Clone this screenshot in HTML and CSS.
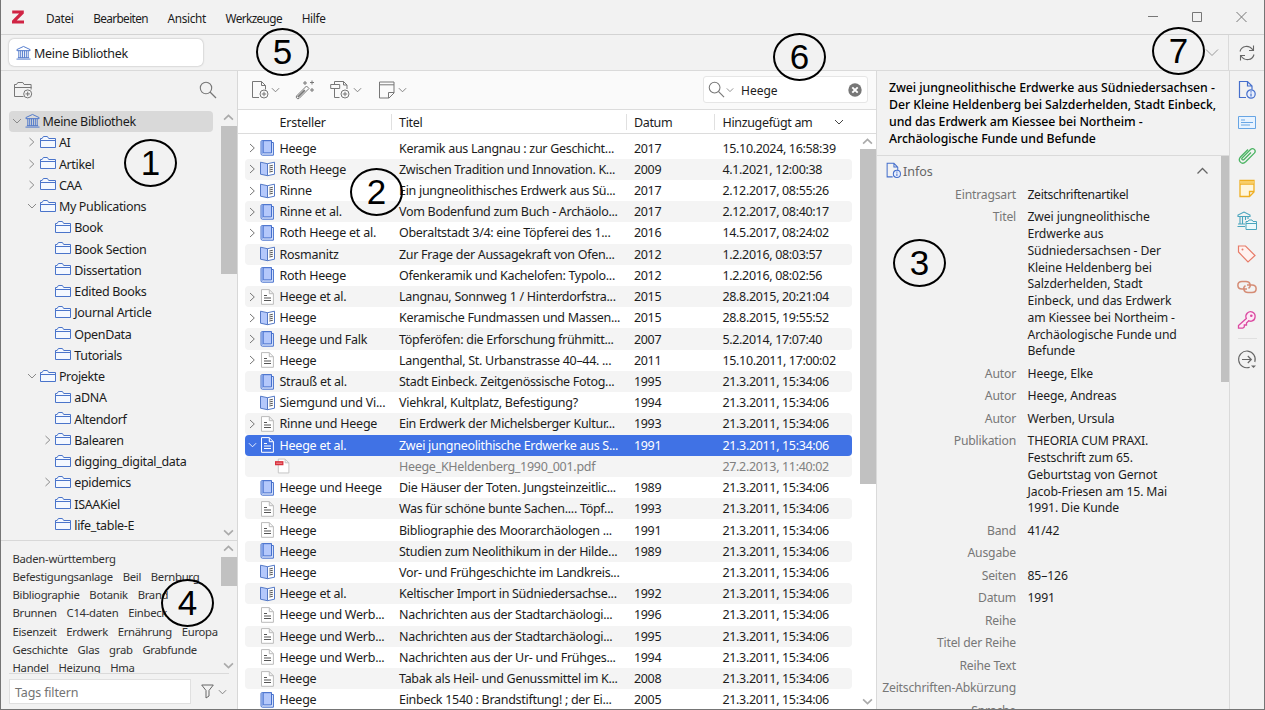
FILE: index.html
```html
<!DOCTYPE html>
<html lang="de">
<head>
<meta charset="utf-8">
<title>Zotero</title>
<link rel="stylesheet" href="styles.css">
</head>
<body>
<svg class="defs" width="0" height="0">
  <symbol id="library" viewBox="0 0 16 16"><path d="M1 5.5V4.3L8 1l7 3.3v1.2zM.5 14.5h15M2 13h12M3 5.5V13M5 5.5V13M7 5.5V13M9 5.5V13M11 5.5V13M13 5.5V13" fill="none" stroke="currentColor"/></symbol>
  <symbol id="folder" viewBox="0 0 16 14"><path d="M.5 12.5v-9h1.6l1.300-2h4l1.300 2h6.800v9zM.5 5.500h15" fill="#f4f8ff" stroke="currentColor"/></symbol>
  <symbol id="right" viewBox="0 0 8 10"><path d="M1.500 1l4.300 4-4.300 4" fill="none" stroke="currentColor"/></symbol>
  <symbol id="down" viewBox="0 0 10 8"><path d="M1 2l4 4 4-4" fill="none" stroke="currentColor"/></symbol>
  <symbol id="up" viewBox="0 0 10 8"><path d="M1 6l4-4 4 4" fill="none" stroke="currentColor"/></symbol>
  <symbol id="book" viewBox="0 0 15 16"><path d="M1 1.500v12.300c0 .9.500 1.400 1.400 1.400h11V2.500h-2V.7H2C1.300.7 1 1 1 1.500z" fill="#e4ecff" stroke="#456fcc"/><path d="M3.200.7h8.300v12.200H3.200z" fill="#b4c8fb" stroke="#456fcc"/><path d="M1.500 1.200h1.500v12.500H1.500z" fill="#7f9fe6"/></symbol>
  <symbol id="section" viewBox="0 0 15 16"><path d="M.5 1.200l7 1.500v12l-7-1.500z" fill="#b4c8fb" stroke="#5579c6"/><path d="M7.500 2.700l7-1.500v12l-7 1.500z" fill="#fff" stroke="#5579c6"/><path d="M9.300 5l3.500-.7M9.300 7l3.500-.7M9.300 9l3.500-.7M9.300 11l3.500-.7" stroke="#555"/></symbol>
  <symbol id="article" viewBox="0 0 15 16"><path d="M1.500.6h7.800l4.100 4.100v10.600H1.500zM9.300.6v4.100h4.100" fill="var(--paper,#fff)" stroke="var(--edge,#bbb)"/><path d="M4 6.500h3M4 9h7M4 11.500h7" stroke="var(--ink,#555)" stroke-width="1.100"/></symbol>
  <symbol id="pdf" viewBox="0 0 16 16"><path d="M3.500.6h7.300l4 4v10.800H3.500zM10.800.6v4h4" fill="#fff" stroke="#c3c3c3"/><path d="M0 2.800h9v4.400H0z" fill="#d8303c"/><path d="M1.300 5h6.400" stroke="#f0a0a6"/></symbol>
  <symbol id="search" viewBox="0 0 18 18"><circle cx="7" cy="7" r="5.700" fill="none" stroke="currentColor" stroke-width="1.100"/><path d="M11 11l6 6" stroke="currentColor" stroke-width="1.200"/></symbol>
</svg>

<div class="window">
  <header class="titlebar">
    <svg class="logo" viewBox="0 0 12 14"><path d="M.2.500h11.600v2.900L4.700 10.600h7.300v3H0v-2.900l7.100-7.200H.2z" fill="#d02444"/></svg>
    <nav class="menu"><span>Datei</span><span>Bearbeiten</span><span>Ansicht</span><span>Werkzeuge</span><span>Hilfe</span></nav>
    <svg class="winbtns" viewBox="0 0 104 14"><path d="M0 6.500h10M44.500 2.500h9v9h-9zM88.500 2l10 10M98.500 2l-10 10" fill="none" stroke="#777"/></svg>
  </header>
  <div class="tabbar">
    <div class="tab"><svg class="lib"><use href="#library"/></svg><span>Meine Bibliothek</span></div>
    <svg class="tabmenu" viewBox="0 0 14 10"><path d="M1 1.500l6 6 6-6" fill="none" stroke="#999"/></svg>
    <div class="sync"><svg viewBox="0 0 18 18"><path d="M2 7.500C3.500 1.500 11 .5 15 6M15.500 1.500V6.500H11M16 10.500C14.500 16.500 7 17.500 3 12M2.500 16.500V11.500H7" fill="none" stroke="#666" stroke-width="1.100"/></svg></div>
  </div>
  <main class="panes">
    <aside class="left">
      <div class="lefttools">
        <svg class="newcol" viewBox="0 0 20 18"><path d="M10.500 15.500H1.500v-12h2l1.300-2h5l1.300 2h7v5M1.500 6.500h17" fill="none" stroke="#777"/><circle cx="14.700" cy="12.900" r="4" fill="#f2f2f2" stroke="#777"/><path d="M12.500 12.900h4.400M14.700 10.700v4.400" stroke="#777"/></svg>
        <svg class="find"><use href="#search"/></svg>
      </div>
      <div class="treebox"><div class="tree" id="tree"></div>
        <div class="scroll treescroll"><svg><use href="#up"/></svg><i></i><b></b><svg><use href="#down"/></svg></div>
      </div>
      <div class="tagbox"><div class="tags" id="tags"></div>
        <div class="scroll tagscroll"><svg><use href="#up"/></svg><i></i><b></b><svg><use href="#down"/></svg></div>
      </div>
      <div class="tagfilter"><div class="field">Tags filtern</div>
        <svg class="funnel" viewBox="0 0 13 15"><path d="M.7 1h11.600L8 6.500v5.500L5 14V6.500z" fill="none" stroke="#666"/></svg>
        <svg class="caret"><use href="#down"/></svg>
      </div>
    </aside>
    <section class="center">
      <div class="toolbar">
        <svg class="t1" viewBox="0 0 18 19"><path d="M8 17.500H1.500v-16h9l4 4v4M10.500 1.500v4h4" fill="none" stroke="#777"/><circle cx="13" cy="14" r="4" fill="none" stroke="#777"/><path d="M10.800 14h4.400M13 11.800v4.400" stroke="#777"/></svg>
        <svg class="caret c1"><use href="#down"/></svg>
        <svg class="t2" viewBox="0 0 20 20"><path d="M1.500 16L11.500 6l2.500 2.500L4 18.500c-1.500 1-3.500-1-2.500-2.500z" fill="none" stroke="#777"/><path d="M2.800 17.200l7-7" stroke="#777" stroke-width="1.800"/><path d="M10 1v4M8 3h4M17 .5v4M15 2.500h4M17 8v4M15 10h4" stroke="#777"/></svg>
        <svg class="t3" viewBox="0 0 20 19"><path d="M4.500 4V1.500h9l3.500 3.500v4M13.500 1.500V5H17M9.500 17.500h-5V9" fill="none" stroke="#777"/><path d="M.7 4.500h9v4h-9z" fill="none" stroke="#777"/><circle cx="15" cy="14" r="4" fill="none" stroke="#777"/><path d="M12.800 14h4.400M15 11.800v4.400" stroke="#777"/></svg>
        <svg class="caret c3"><use href="#down"/></svg>
        <svg class="t4" viewBox="0 0 16 18"><path d="M.5 1h14.500v11l-5 5H.5zM.5 3.800H15M15 11.500H9.500V17" fill="none" stroke="#777"/></svg>
        <svg class="caret c4"><use href="#down"/></svg>
        <div class="search"><svg class="lens"><use href="#search"/></svg><svg class="caret"><use href="#down"/></svg><span>Heege</span>
          <svg class="clear" viewBox="0 0 14 14"><circle cx="7" cy="7" r="6.700" fill="#777"/><path d="M4.300 4.300l5.400 5.400M9.700 4.300L4.300 9.700" stroke="#fff" stroke-width="1.900"/></svg></div>
      </div>
      <div class="cols head"><span></span><span>Ersteller</span><span class="sep">Titel</span><span class="sep">Datum</span><span class="sep">Hinzugefügt am<svg class="caret"><use href="#down"/></svg></span></div>
      <div class="listbox"><div class="list" id="list"></div>
        <div class="scroll listscroll"><svg><use href="#up"/></svg><i></i><b></b><svg><use href="#down"/></svg></div>
      </div>
    </section>
    <section class="right">
      <h1>Zwei jungneolithische Erdwerke aus Südniedersachsen -<br>Der Kleine Heldenberg bei Salzderhelden, Stadt Einbeck,<br>und das Erdwerk am Kiessee bei Northeim -<br>Archäologische Funde und Befunde</h1>
      <div class="infobox">
        <div class="info">
          <div class="infohead"><svg class="pageinfo"><use href="#pageinfo"/></svg><span>Infos</span><svg class="fold"><use href="#up"/></svg></div>
          <dl id="fields"></dl>
        </div>
        <div class="rscroll"></div>
      </div>
    </section>
    <aside class="rail">
      <svg class="ri" viewBox="0 0 20 20"><symbol id="pageinfo" viewBox="0 0 20 20"><path d="M9 17.500H2.500v-16h8l4.500 4.500v3.500M10.500 1.500V6H15" fill="none" stroke="#456fcc" stroke-width="1.200"/><circle cx="14" cy="14" r="4.200" fill="#e9effd" stroke="#456fcc" stroke-width="1.200"/><path d="M14 13.500V16.500M14 11.300v1.200" stroke="#456fcc" stroke-width="1.200"/></symbol><use href="#pageinfo"/></svg>
      <svg class="ri" viewBox="0 0 20 20"><path d="M1.500 3.500h17v12h-17z" fill="#e8f3ff" stroke="#67a5e4"/><path d="M4 7h4M4 9.500h12M4 12h9" stroke="#67a5e4" stroke-width="1.200"/></svg>
      <svg class="ri" viewBox="0 0 20 20"><path d="M13.500 6.500l-7 7c-1.300 1.300-3-.4-1.700-1.700L13 3.500c2.700-2.400 6.200.9 3.800 3.600l-8.600 8.700c-3.800 3.600-8.600-1-5-5L10.500 3.500" transform="translate(.5 0)" fill="none" stroke="#4bb463" stroke-width="1.300"/></svg>
      <svg class="ri" viewBox="0 0 20 20"><path d="M3 1.500h14v11.500l-4.500 4.500H3zM3 5h14M17 12.500h-4.500v5" fill="#fff6dc" stroke="#efaf22" stroke-width="1.300"/><path d="M3 2h14v2.500H3z" fill="#f8ce68"/></svg>
      <svg class="ri" viewBox="0 0 20 20"><path d="M1 5.500V4l6-3 6 3v1.500zM3 6v7M5.500 6v7M8.500 6v3M11 6v2M1 13h7M.5 15.500H8" fill="none" stroke="#4aa5bd" stroke-width="1.100"/><path d="M9 18.500v-8h2l1-1.500h3l1 1.500h3.500v8zM9 12.500h10.500" fill="#edf9fb" stroke="#4aa5bd"/></svg>
      <svg class="ri" viewBox="0 0 20 20"><path d="M1.500 8V2h7l9.500 9.500-7 6.500z" fill="#fff2f0" stroke="#e77c69" stroke-width="1.200"/><circle cx="5.500" cy="5.500" r="1" fill="#e77c69"/></svg>
      <svg class="ri" viewBox="0 0 20 20"><path d="M10 12H5C-.5 12-.5 4.500 5 4.500h4c4.500 0 5.500 5 2.500 6.800M10 8h5c5.500 0 5.500 7.500 0 7.500h-4c-4.500 0-5.500-5-2.500-6.800" fill="none" stroke="#d58c75" stroke-width="1.500"/></svg>
      <svg class="ri" viewBox="0 0 20 20"><path d="M9.300 8.600C7.500 4 12 .5 15.500 2.200c4 2 3.200 8.300-1 9-1.200.2-2-.2-2.800-.5L9.500 13v2H7.300v2l-1.500 1.200H1.500v-2.700z" fill="#fdeaf6" stroke="#db4aa1" stroke-width="1.300"/><circle cx="14.300" cy="5.700" r="1.300" fill="#db4aa1"/></svg>
      <hr>
      <svg class="ri" viewBox="0 0 20 20"><path d="M12.700 17.200A8.300 8.300 0 1 1 17.800 12" fill="none" stroke="#666" stroke-width="1.100"/><path d="M5 9.500h9M10.800 6l3.500 3.500-3.500 3.500" fill="none" stroke="#666" stroke-width="1.200"/><path d="M14 15.500h5l-2.500 2.500z" fill="#666"/></svg>
    </aside>
  </main>
  <div class="mark m1">1</div><div class="mark m2">2</div><div class="mark m3">3</div><div class="mark m4">4</div><div class="mark m5">5</div><div class="mark m6">6</div><div class="mark m7">7</div>
</div>
<script src="app.js"></script>
</body>
</html>
```

FILE: styles.css
```css
* { box-sizing: border-box; }
body { margin: 0; font-family: "Noto Sans", "Open Sans", sans-serif; font-size: 12.5px; color: #1c1c1c; }
.defs { position: absolute; }
svg { display: block; flex: none; }
.window { position: relative; width: 1265px; height: 710px; overflow: hidden; background: #f2f2f2; display: flex; flex-direction: column; border: solid #757575; border-width: 0 1px 1px 1px; }

.titlebar { height: 35px; flex: none; display: flex; align-items: center; border-bottom: 1px solid #d3d3d3; }
.logo { width: 12px; height: 14px; margin-left: 11px; }
.menu { display: flex; gap: 19.700px; margin-left: 22px; padding-top: 1px; font-size: 11.800px; letter-spacing: -.620px; white-space: nowrap; }
.menu span:nth-child(odd) { letter-spacing: -.350px; }
.winbtns { width: 104px; height: 14px; margin-left: auto; margin-right: 12px; }

.tabbar { height: 36px; flex: none; display: flex; align-items: center; border-bottom: 1px solid #dadada; }
.tab { width: 194px; height: 27px; margin-left: 8px; padding-left: 7px; display: flex; align-items: center; gap: 3px; background: #fff; border-radius: 5px; box-shadow: 0 0 2px #0005; letter-spacing: -.300px; }
.tab span { padding-top: 2px; }
.lib { width: 15px; height: 16px; color: #4a74ca; }
.tabmenu { width: 14px; height: 10px; margin-left: auto; margin-right: 9px; }
.sync { width: 36px; height: 35px; display: flex; align-items: center; justify-content: center; border-left: 1px solid #dadada; }
.sync svg { width: 18px; height: 18px; }

.panes { flex: 1; min-height: 0; display: flex; }
.left { width: 236.500px; flex: none; display: flex; flex-direction: column; border-right: 1px solid #d8d8d8; }
.lefttools { height: 39px; flex: none; display: flex; align-items: center; justify-content: space-between; padding: 0 19.500px 2px 12px; }
.newcol { width: 20px; height: 18px; }
.find { width: 18px; height: 18px; color: #777; }
.treebox { height: 431px; flex: none; position: relative; display: flex; overflow: hidden; border-bottom: 1px solid #d8d8d8; }
.tree { width: 204px; margin-left: 8px; padding-top: .5px; letter-spacing: -.340px; }
.node { height: 21.250px; display: flex; align-items: center; border-radius: 4px; white-space: nowrap; }
.node.sel { background: #d9d9d9; }
.node span:last-child { padding-top: 1px; }
.node .tw { width: 15.500px; display: flex; justify-content: center; color: #8a8a8a; }
.node .tw svg { width: 10px; height: 10px; }
.node .fo { width: 16px; height: 14px; color: #4a74ca; margin-right: 3px; margin-top: -1px; }
.node .lib { margin-right: 3px; }
.scroll { position: absolute; right: 0; top: 0; bottom: 0; width: 16px; display: flex; flex-direction: column; align-items: center; color: #aaa; }
.scroll svg { width: 11px; height: 9px; stroke-width: 1.500; }
.scroll i { width: 16px; background: #c1c1c1; }
.scroll b { flex: 1; }
.treescroll { padding: 3px 0; }
.treescroll i { height: 148px; margin-top: 4px; }
.tagbox { height: 132px; flex: none; position: relative; display: flex; overflow: hidden; }
.tags { padding: 8.500px 0 0 11.500px; font-size: 11.300px; line-height: 18.300px; letter-spacing: -.290px; color: #333; white-space: nowrap; }
.tags div { display: flex; gap: 9.800px; }
.tagscroll { padding: 3px 0; }
.tagscroll i { height: 29px; margin-top: 4px; }
.tagfilter { flex: 1; margin: 0 8px; border-top: 1px solid #dadada; display: flex; align-items: center; }
.field { width: 182px; height: 25px; padding-left: 5px; line-height: 25px; background: #fff; border: 1px solid #e0e0e0; color: #737373; letter-spacing: -.150px; }
.funnel { width: 13px; height: 15px; margin-left: 10px; }
.caret { width: 9px; height: 8px; color: #777; }
.tagfilter .caret { margin-left: 4px; }

.center { width: 638px; flex: none; background: #fff; display: flex; flex-direction: column; }
.toolbar { height: 39px; flex: none; background: #fafafa; border-bottom: 1px solid #dcdcdc; display: flex; align-items: center; padding: 0 0 1px 13px; }
.t1 { width: 18px; height: 19px; }
.c1 { margin-left: 2.500px; }
.t2 { width: 20px; height: 20px; margin-left: 14.500px; }
.t3 { width: 20px; height: 19px; margin-left: 15px; }
.c3 { margin-left: 3px; }
.t4 { width: 16px; height: 18px; margin-left: 17px; }
.c4 { margin-left: 3.500px; }
.search { width: 165px; height: 27px; margin-left: auto; margin-right: 7.500px; background: #fff; border: 1px solid #e6e6e6; border-radius: 3px; display: flex; align-items: center; padding: 0 5px 0 4px; }
.lens { width: 17px; height: 17px; color: #777; margin-right: 1px; }
.search .caret { width: 8px; }
.search span { margin-left: 7px; font-size: 12px; padding-top: 2px; }
.clear { width: 14px; height: 14px; margin-left: auto; }
.cols { display: grid; grid-template-columns: 35px 119.500px 235px 88.500px 1fr; align-items: center; white-space: nowrap; }
.cols > span:nth-child(2) { letter-spacing: -.240px; }
.cols > span:nth-child(3) { letter-spacing: -.295px; }
.cols > span:nth-child(n+4) { letter-spacing: -.345px; }
.head { height: 24px; flex: none; padding-left: 7px; padding-top: 1px; border-bottom: 1px solid #dcdcdc; }
.head > span { display: flex; align-items: center; }
.head .sep { border-left: 1px solid #e0e0e0; margin-left: -8.500px; padding-left: 7.500px; height: 16px; }
.head .caret { margin-left: 21.500px; color: #444; width: 10px; }
.listbox { flex: 1; min-height: 0; position: relative; overflow: hidden; padding: 3.500px 0 0 7px; }
.list { width: 607px; }
.row { height: 21.230px; border-radius: 4px; }
.row:nth-child(even) { background: #f4f4f4; }
.row .ic { display: flex; align-items: center; color: #777; }
.row .ic .tw { flex: none; width: 15.500px; padding-left: 3.500px; }
.row .ic .tw svg { width: 9px; height: 10px; }
.row .ic .ty { width: 15px; height: 16px; }
.row.child .ic .ty { margin-left: 15px; }
.row.child { color: #808080; background: #f4f4f4; }
.row.sel { background: #4072e5; color: #fff; --paper: #4072e5; --edge: #fff; --ink: #fff; }
.row.sel .ic { color: #fff; }
.listscroll { padding: 3px 0; }
.listscroll i { height: 335px; margin-top: 3px; }

.right { width: 353.500px; flex: none; display: flex; flex-direction: column; border-left: 1px solid #dadada; }
.right h1 { margin: 0; height: 85px; flex: none; padding: 9px 0 0 12.500px; font-size: 12.300px; line-height: 16.900px; letter-spacing: -.060px; font-weight: 500; color: #000; white-space: nowrap; border-bottom: 1px solid #dadada; }
.infobox { flex: 1; min-height: 0; display: flex; overflow: hidden; }
.info { flex: 1; }
.infohead { height: 27px; display: flex; align-items: center; padding: 2px 11px 0 8px; color: #666; }
.infohead span { padding-top: 1px; }
.pageinfo { width: 17px; height: 17px; margin-right: 1.500px; }
.fold { width: 13px; height: 10px; margin-left: auto; margin-right: 1px; color: #666; }
dl { margin: 0; display: grid; grid-template-columns: 139.500px 1fr; column-gap: 11.500px; row-gap: 5.720px; line-height: 16.750px; white-space: nowrap; font-size: 12.200px; padding-top: 4px; }
dt { text-align: right; color: #777; letter-spacing: -.200px; }
dd { margin: 0; letter-spacing: -.120px; }
dd:first-of-type { letter-spacing: -.350px; }
.rscroll { width: 8px; height: 226px; background: #c1c1c1; }

.rail { flex: 1; border-left: 1px solid #dadada; display: flex; flex-direction: column; align-items: center; padding-top: 9px; gap: 12.850px; }
.ri { width: 20px; height: 20px; }
.rail hr { width: 19px; margin: -4.500px 0 -2.500px; border: 0; border-top: 1px solid #e0e0e0; }

.mark { position: absolute; width: 53px; height: 48px; border: 2px solid #000; border-radius: 50%; color: #000; font: 35px/44px "Liberation Sans", Arial, sans-serif; text-align: center; }
.m1 { left: 123px; top: 139px; }
.m2 { left: 349px; top: 168px; }
.m3 { left: 892px; top: 239px; }
.m4 { left: 160px; top: 579px; }
.m5 { left: 255px; top: 28px; }
.m6 { left: 772px; top: 33px; }
.m7 { left: 1151px; top: 27px; }
```

FILE: app.js
```js
const use = (id, cls) => `<svg class="${cls || ''}"><use href="#${id}"/></svg>`;

// [level, label, twisty]
const nodes = [
  [0, 'Meine Bibliothek', 'down'], [1, 'AI', 'right'], [1, 'Artikel', 'right'], [1, 'CAA', 'right'],
  [1, 'My Publications', 'down'], [2, 'Book'], [2, 'Book Section'], [2, 'Dissertation'], [2, 'Edited Books'],
  [2, 'Journal Article'], [2, 'OpenData'], [2, 'Tutorials'], [1, 'Projekte', 'down'], [2, 'aDNA'],
  [2, 'Altendorf'], [2, 'Balearen', 'right'], [2, 'digging_digital_data'], [2, 'epidemics', 'right'],
  [2, 'ISAAKiel'], [2, 'life_table-E'], [2, '']
];
document.getElementById('tree').innerHTML = nodes.map(([lv, label, tw]) =>
  `<div class="node${lv ? '' : ' sel'}" style="padding-left:${lv * 15.4}px"><span class="tw">${tw ? use(tw) : ''}</span>` +
  `${lv ? use('folder', 'fo') : use('library', 'lib')}<span>${label}</span></div>`).join('');

const tags = ['Baden-württemberg', 'Befestigungsanlage|Beil|Bernburg', 'Bibliographie|Botanik|Brand',
  'Brunnen|C14-daten|Einbeck', 'Eisenzeit|Erdwerk|Ernährung|Europa', 'Geschichte|Glas|grab|Grabfunde', 'Handel|Heizung|Hma'];
document.getElementById('tags').innerHTML = tags.map(l =>
  `<div>${l.split('|').map(t => `<span>${t}</span>`).join('')}</div>`).join('');

// [twisty, type, creator, title, year, added]
const T = '21.3.2011, 15:34:06';
const rows = [
  [1, 'book', 'Heege', 'Keramik aus Langnau : zur Geschicht...', '2017', '15.10.2024, 16:58:39'],
  [1, 'section', 'Roth Heege', 'Zwischen Tradition und Innovation. K...', '2009', '4.1.2021, 12:00:38'],
  [1, 'section', 'Rinne', 'Ein jungneolithisches Erdwerk aus Sü...', '2017', '2.12.2017, 08:55:26'],
  [1, 'book', 'Rinne et al.', 'Vom Bodenfund zum Buch - Archäolo...', '2017', '2.12.2017, 08:40:17'],
  [1, 'book', 'Roth Heege et al.', 'Oberaltstadt 3/4: eine Töpferei des 1...', '2016', '14.5.2017, 08:24:02'],
  [0, 'section', 'Rosmanitz', 'Zur Frage der Aussagekraft von Ofen...', '2012', '1.2.2016, 08:03:57'],
  [0, 'book', 'Roth Heege', 'Ofenkeramik und Kachelofen: Typolo...', '2012', '1.2.2016, 08:02:56'],
  [1, 'article', 'Heege et al.', 'Langnau, Sonnweg 1 / Hinterdorfstra...', '2015', '28.8.2015, 20:21:04'],
  [1, 'section', 'Heege', 'Keramische Fundmassen und Massen...', '2015', '28.8.2015, 19:55:52'],
  [1, 'book', 'Heege und Falk', 'Töpferöfen: die Erforschung frühmitt...', '2007', '5.2.2014, 17:07:40'],
  [1, 'article', 'Heege', 'Langenthal, St. Urbanstrasse 40–44. ...', '2011', '15.10.2011, 17:00:02'],
  [0, 'book', 'Strauß et al.', 'Stadt Einbeck. Zeitgenössische Fotog...', '1995', T],
  [0, 'section', 'Siemgund und Vi...', 'Viehkral, Kultplatz, Befestigung?', '1994', T],
  [1, 'article', 'Rinne und Heege', 'Ein Erdwerk der Michelsberger Kultur...', '1993', T],
  [2, 'article', 'Heege et al.', 'Zwei jungneolithische Erdwerke aus S...', '1991', T],
  [0, 'pdf', '', 'Heege_KHeldenberg_1990_001.pdf', '', '27.2.2013, 11:40:02'],
  [0, 'book', 'Heege und Heege', 'Die Häuser der Toten. Jungsteinzeitlic...', '1989', T],
  [0, 'article', 'Heege', 'Was für schöne bunte Sachen.... Töpf...', '1993', T],
  [0, 'article', 'Heege', 'Bibliographie des Moorarchäologen ...', '1991', T],
  [0, 'book', 'Heege', 'Studien zum Neolithikum in der Hilde...', '1989', T],
  [0, 'section', 'Heege', 'Vor- und Frühgeschichte im Landkreis...', '', T],
  [0, 'section', 'Heege et al.', 'Keltischer Import in Südniedersachse...', '1992', T],
  [0, 'article', 'Heege und Werb...', 'Nachrichten aus der Stadtarchäologi...', '1996', T],
  [0, 'article', 'Heege und Werb...', 'Nachrichten aus der Stadtarchäologi...', '1995', T],
  [0, 'article', 'Heege und Werb...', 'Nachrichten aus der Ur- und Frühges...', '1994', T],
  [0, 'article', 'Heege', 'Tabak als Heil- und Genussmittel im K...', '2008', T],
  [0, 'book', 'Heege', 'Einbeck 1540 : Brandstiftung! ; der Ei...', '2005', T]
];
document.getElementById('list').innerHTML = rows.map(([tw, type, who, title, year, added]) =>
  `<div class="cols row${tw === 2 ? ' sel' : ''}${type === 'pdf' ? ' child' : ''}">` +
  `<span class="ic"><span class="tw">${tw ? use(tw === 2 ? 'down' : 'right') : ''}</span>${use(type, 'ty')}</span>` +
  `<span>${who}</span><span>${title}</span><span>${year}</span><span>${added}</span></div>`).join('');

const fields = [
  ['Eintragsart', 'Zeitschriftenartikel'],
  ['Titel', 'Zwei jungneolithische<br>Erdwerke aus<br>Südniedersachsen - Der<br>Kleine Heldenberg bei<br>Salzderhelden, Stadt<br>Einbeck, und das Erdwerk<br>am Kiessee bei Northeim -<br>Archäologische Funde und<br>Befunde'],
  ['Autor', 'Heege, Elke'], ['Autor', 'Heege, Andreas'], ['Autor', 'Werben, Ursula'],
  ['Publikation', 'THEORIA CUM PRAXI.<br>Festschrift zum 65.<br>Geburtstag von Gernot<br>Jacob-Friesen am 15. Mai<br>1991. Die Kunde'],
  ['Band', '41/42'], ['Ausgabe', ''], ['Seiten', '85–126'], ['Datum', '1991'], ['Reihe', ''],
  ['Titel der Reihe', ''], ['Reihe Text', ''], ['Zeitschriften-Abkürzung', ''], ['Sprache', '']
];
document.getElementById('fields').innerHTML = fields.map(([k, v]) => `<dt>${k}</dt><dd>${v}</dd>`).join('');
```
